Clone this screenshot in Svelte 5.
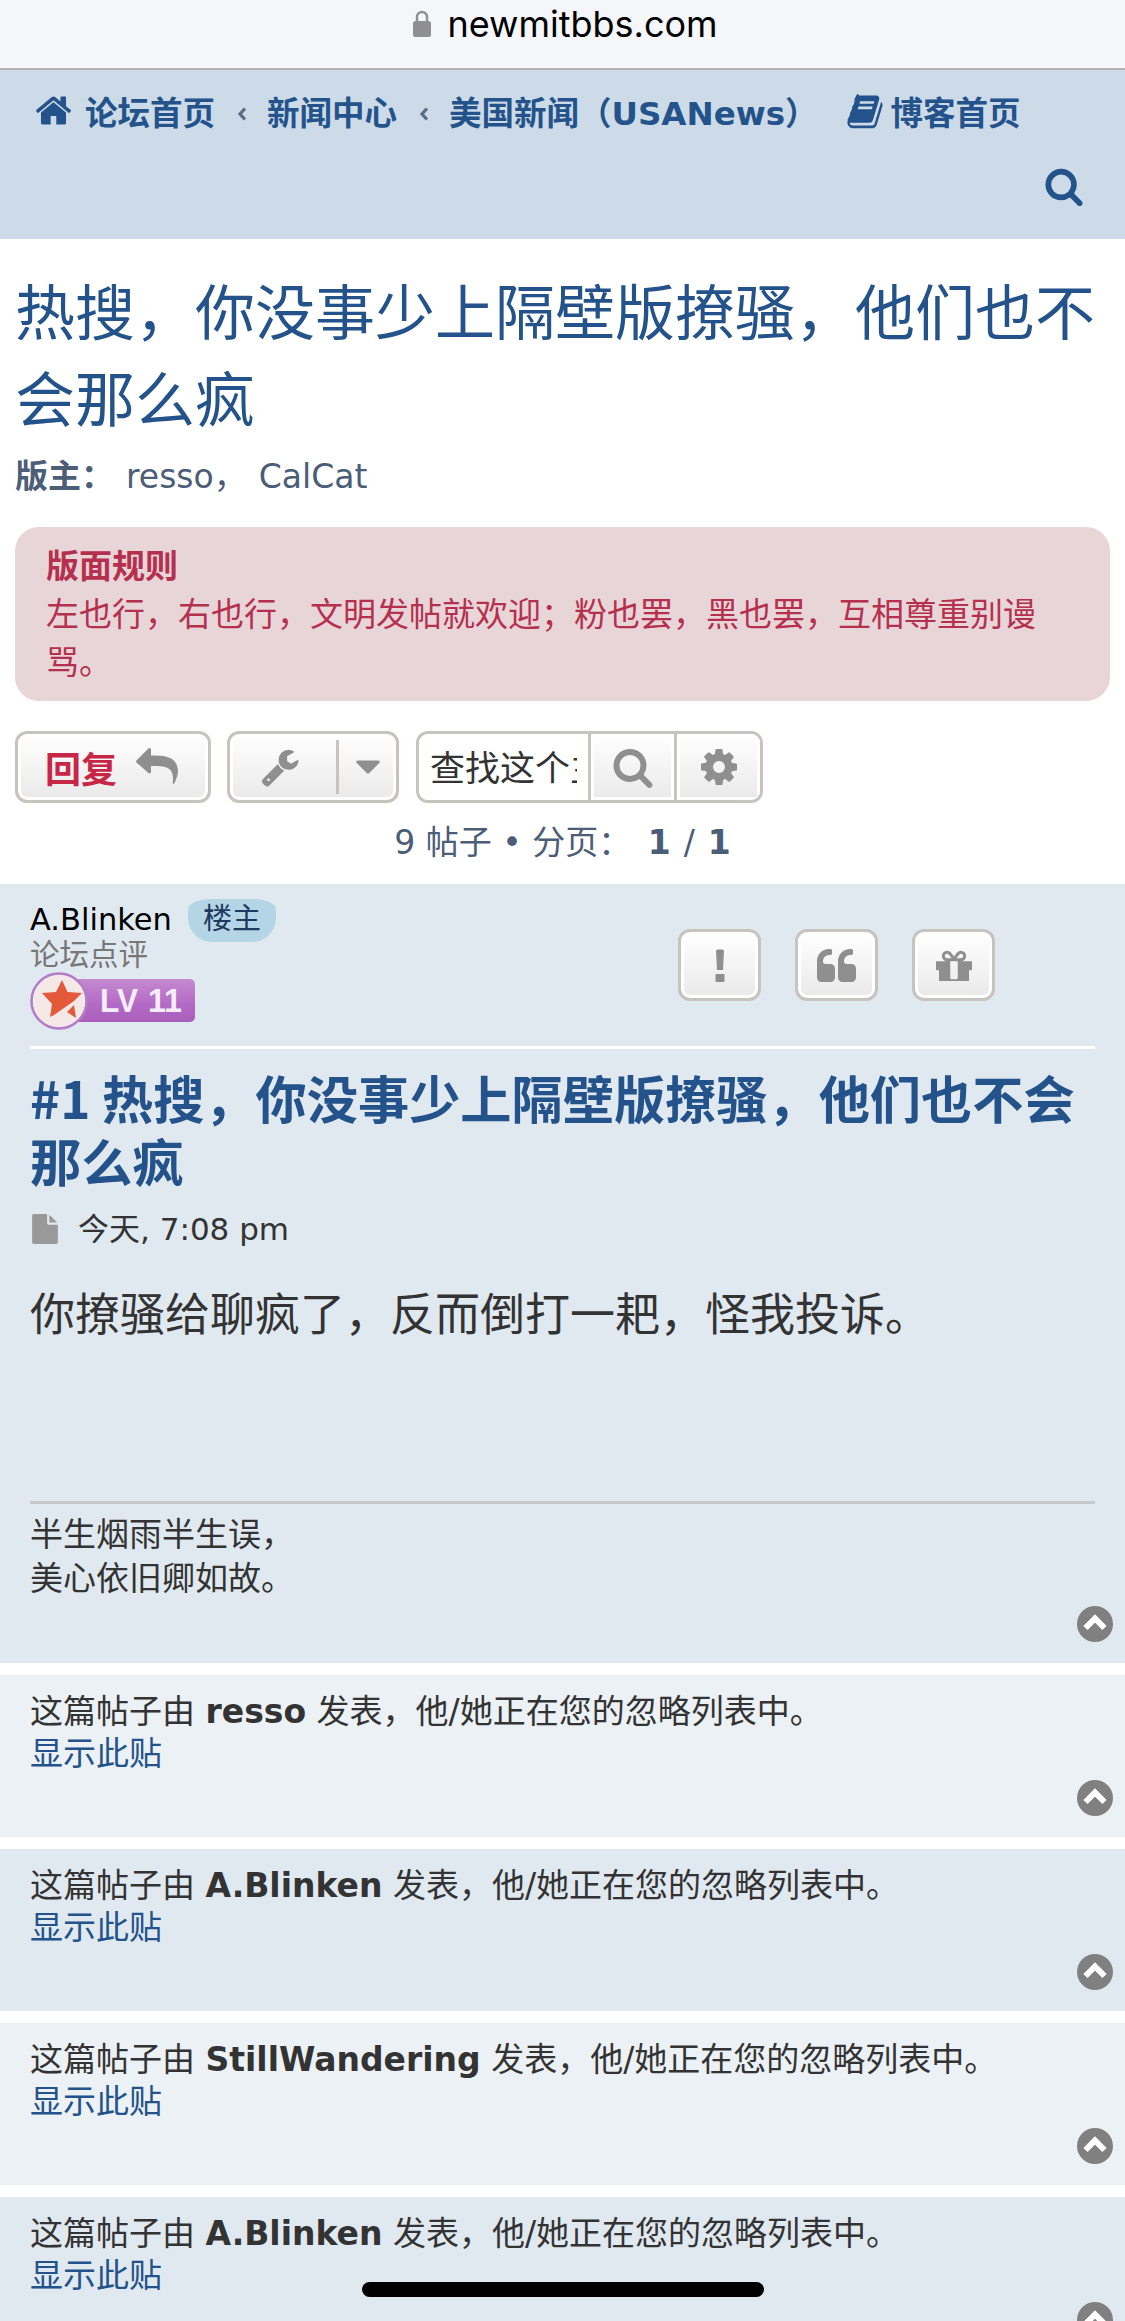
<script>
  const faBook = "M1703 478q40 57 18 129l-275 906q-19 64-76.5 107.5T1247 1664H324q-77 0-148.5-53.5T76 1479q-24-67-2-127 0-4 3-27t4-37q1-8-3-21.5t-3-19.5q2-11 8-21t16.5-23.5T116 1179q23-38 45-91.5t30-91.5q3-10 .5-30t-.5-28q3-11 17-28t17-23q21-36 42-92t25-90q1-9-2.5-32t.5-28q4-13 22-30.5t22-22.5q19-26 42.5-84.5T404 326q1-8-3-25.5t-2-26.5q2-8 9-18t18-23 17-21q8-12 16.5-30.5t15-35 16-36 19.5-32 26.5-23.5 36-11.5T620 128l-1 3q38-9 51-9h761q74 0 114 56t18 130l-274 906q-36 119-71.5 153.5T1089 1402H220q-27 0-38 15-11 16-1 43 24 70 144 70h923q29 0 56-15.5t35-41.5l300-987q7-22 5-57 38 15 59 43zm-1064 2q-4 13 2 22.5t20 9.5h608q13 0 25.5-9.5T1311 480l21-64q4-13-2-22.5t-20-9.5H702q-13 0-25.5 9.5T660 416zm-83 256q-4 13 2 22.5t20 9.5h608q13 0 25.5-9.5T1228 736l21-64q4-13-2-22.5t-20-9.5H619q-13 0-25.5 9.5T577 672z";
  const faHome = "M1472 992v480q0 26-19 45t-45 19h-384v-384H768v384H384q-26 0-45-19t-19-45V992q0-1 .5-3t.5-3l575-474 575 474q1 2 1 6zm223-69l-62 74q-8 9-21 11h-3q-13 0-21-7L896 424l-692 577q-12 8-24 7-13-2-21-11l-62-74q-8-10-7-23.5t11-21.5l719-599q32-26 76-26t76 26l244 204V288q0-14 9-23t23-9h192q14 0 23 9t9 23v408l219 182q10 8 11 21.5t-7 23.5z";
  const faSearch = "M1216 832q0-185-131.5-316.5T768 384 451.5 515.5 320 832t131.5 316.5T768 1280t316.5-131.5T1216 832zm512 832q0 52-38 90t-90 38q-54 0-90-38l-343-342q-179 124-399 124-143 0-273.5-55.5t-225-150-150-225T64 832t55.5-273.5 150-225 225-150T768 128t273.5 55.5 225 150 150 225T1472 832q0 220-124 399l343 343q37 37 37 90z";
  const faReply = "M1792 1120q0 166-127 451-3 7-10.5 24t-13.5 30-13 22q-12 17-28 17-15 0-23.5-10t-8.5-25q0-9 2.5-26.5t2.5-23.5q5-68 5-123 0-101-17.5-181t-48.5-138.5-80-101-105.5-69.5-133-42.5-154-21.5-175.5-6H640v256q0 26-19 45t-45 19-45-19L19 749Q0 730 0 704t19-45l512-512q19-19 45-19t45 19 19 45v256h224q713 0 875 403 53 134 53 333z";
  const faWrench = "M448 1472q0-26-19-45t-45-19-45 19-19 45 19 45 45 19 45-19 19-45zm644-420l-682 682q-37 37-90 37-52 0-91-37l-106-108q-38-36-38-90 0-53 38-91l681-681q39 98 114.5 173.5T1092 1052zm634-435q0 39-23 106-47 134-164.5 217.5T1280 1024q-185 0-316.5-131.5T832 576t131.5-316.5T1280 128q58 0 121.5 16.5T1509 191q16 11 16 28t-16 28l-293 169v224l193 107q5-3 79-48.5t135.5-81 70.5-35.5q15 0 23.5 10t8.5 25z";
  const faCaret = "M1408 704q0 26-19 45l-448 448q-19 19-45 19t-45-19L403 749q-19-19-19-45t19-45 45-19h896q26 0 45 19t19 45z";
  const faCog = "M1152 896q0-106-75-181t-181-75-181 75-75 181 75 181 181 75 181-75 75-181zm512-109v222q0 12-8 23t-20 13l-185 28q-19 54-39 91 35 50 107 138 10 12 10 25t-9 23q-27 37-99 108t-94 71q-12 0-26-9l-138-108q-44 23-91 38-16 136-29 186-7 28-36 28H785q-14 0-24.5-8.5T749 1634l-28-184q-49-16-90-37l-141 107q-10 9-25 9-14 0-25-11-126-114-165-168-7-10-7-23 0-12 8-23 15-21 51-66.5t54-70.5q-27-50-41-99l-183-27q-13-2-21-12.5t-8-23.5V783q0-12 8-23t19-13l186-28q14-46 39-92-40-57-107-138-10-12-10-24 0-10 9-23 26-36 98.5-107.5T465 263q13 0 26 10l138 107q44-23 91-38 16-136 29-186 7-28 36-28h222q14 0 24.5 8.5T1043 158l28 184q49 16 90 37l142-107q9-9 24-9 13 0 25 10 129 119 165 170 7 8 7 22 0 12-8 23-15 21-51 66.5t-54 70.5q26 50 41 98l183 28q13 2 21 12.5t8 23.5z";
  const faQuote = "M768 960v384q0 80-56 136t-136 56H192q-80 0-136-56T0 1344V640q0-104 40.5-198.5T150 278t163.5-109.5T512 128h64q26 0 45 19t19 45v128q0 26-19 45t-45 19h-64q-106 0-181 75t-75 181v32q0 40 28 68t68 28h224q80 0 136 56t56 136zm896 0v384q0 80-56 136t-136 56h-384q-80 0-136-56t-56-136V640q0-104 40.5-198.5T1046 278t163.5-109.5T1408 128h64q26 0 45 19t19 45v128q0 26-19 45t-45 19h-64q-106 0-181 75t-75 181v32q0 40 28 68t68 28h224q80 0 136 56t56 136z";
  const faGift = "M1056 1356v-716H736v716q0 25 18 38.5t46 13.5h192q28 0 46-13.5t18-38.5zM600 512h195L669 351q-26-31-69-31-40 0-68 28t-28 68 28 68 68 28zm688-96q0-40-28-68t-68-28q-43 0-69 31l-125 161h194q40 0 68-28t28-68zm376 256v320q0 14-9 23t-23 9h-96v416q0 40-28 68t-68 28H352q-40 0-68-28t-28-68v-416h-96q-14 0-23-9t-9-23V672q0-14 9-23t23-9h440q-93 0-158.5-65.5T376 416t65.5-158.5T600 192q107 0 168 77l128 165 128-165q61-77 168-77 93 0 158.5 65.5T1416 416t-65.5 158.5T1192 640h440q14 0 23 9t9 23z";
  const faFile = "M1024 512V40q22 14 36 28l408 408q14 14 28 36h-472zm-128 32q0 40 28 68t68 28h544v1056q0 40-28 68t-68 28H96q-40 0-68-28t-28-68V96q0-40 28-68t68-28h800v544z";

  const ignored = [
    { name: "resso", alt: true },
    { name: "A.Blinken", alt: false },
    { name: "StillWandering", alt: true },
    { name: "A.Blinken", alt: false }
  ];
</script>

{#snippet fa(d, cls, box = "0 0 1792 1792")}
  <svg class={cls} viewBox={box} xmlns="http://www.w3.org/2000/svg"><path fill="currentColor" d={d} /></svg>
{/snippet}

{#snippet chevronLeft()}
  <svg class="crumb-sep" viewBox="0 0 10 14"><path d="M8 1.500 3 7l5 5.500" fill="none" stroke="#5b6b84" stroke-width="3.200" /></svg>
{/snippet}

{#snippet backTop()}
  <div class="back-top">
    <svg viewBox="0 0 36 36" class="back-icon">
      <circle cx="18" cy="18" r="18" fill="#808080" />
      <path d="M8.500 22 18 12.500 27.500 22" fill="none" stroke="#fff" stroke-width="6" />
    </svg>
  </div>
{/snippet}

<div class="page">
  <div class="addr">
    <svg class="lock" viewBox="0 0 18 27">
      <path d="M4 12V7a5 5 0 0 1 10 0v5" fill="none" stroke="#8e8e93" stroke-width="2.400" />
      <rect x="0" y="11" width="18" height="16" rx="2.500" fill="#8e8e93" />
    </svg>
    <span>newmitbbs.com</span>
  </div>

  <nav class="nav">
    <div class="crumbs">
      {@render fa(faHome, "i-home")}
      <a class="crumb first">论坛首页</a>
      {@render chevronLeft()}
      <a class="crumb">新闻中心</a>
      {@render chevronLeft()}
      <a class="crumb">美国新闻（USANews）</a>
      {@render fa(faBook, "i-book")}
      <a class="crumb blog">博客首页</a>
    </div>
    <div class="nav-search">
      {@render fa(faSearch, "i-nav-search")}
    </div>
  </nav>

  <h2 class="forum-title">热搜，你没事少上隔壁版撩骚，他们也不会那么疯</h2>
  <p class="mods"><strong>版主：</strong><span class="m1">resso，</span><span class="m2">CalCat</span></p>

  <div class="rules">
    <strong>版面规则</strong>
    <div>左也行，右也行，文明发帖就欢迎；粉也罢，黑也罢，互相尊重别谩骂。</div>
  </div>

  <div class="actions">
    <button class="btn reply">回复 {@render fa(faReply, "i-reply")}</button>
    <button class="btn tools">
      <span class="tool-cell">{@render fa(faWrench, "i-wrench")}</span>
      <span class="tool-div"></span>
      <span class="caret-cell">{@render fa(faCaret, "i-caret", "370 630 1050 640")}</span>
    </button>
    <div class="search">
      <input type="text" value="查找这个主题" />
      <span class="s-btn s-first">{@render fa(faSearch, "i-s")}</span>
      <span class="s-btn">{@render fa(faCog, "i-s")}</span>
    </div>
  </div>

  <div class="pagination">9 帖子 • 分页： <strong class="pg">1</strong><span class="slash">/</span><strong>1</strong></div>

  <article class="post">
    <div class="profile">
      <div class="who">
        <div class="name-row">
          <span class="name">A.Blinken</span><span class="pill">楼主</span>
        </div>
        <div class="rank">论坛点评</div>
        <svg class="badge" viewBox="0 0 165 58">
          <defs>
            <linearGradient id="bar" x1="0" y1="0" x2="0" y2="1">
              <stop offset="0" stop-color="#c48ad0" />
              <stop offset="0.550" stop-color="#b56cc6" />
              <stop offset="1" stop-color="#a85fbb" />
            </linearGradient>
          </defs>
          <rect x="40" y="7" width="125" height="43" rx="5" fill="url(#bar)" />
          <circle cx="29" cy="29" r="27.500" fill="#f4e9e6" stroke="#b27cc8" stroke-width="2.500" />
          <path d="M32 8l5.500 12L52 21l-8 8-20 14-4 2 2-13-10-11 14-1z" fill="#e4593a" />
          <path d="M44 33l2 13-9-6z" fill="#e4593a" />
          <text x="70" y="40" class="lv" textLength="38" lengthAdjust="spacingAndGlyphs">LV</text>
          <text x="118" y="40" class="lv" textLength="34" lengthAdjust="spacingAndGlyphs">11</text>
        </svg>
      </div>
      <div class="post-btns">
        <button class="btn sq">
          <svg class="i-bang" viewBox="0 0 10 33"><path fill="currentColor" d="M1 2a1.500 1.500 0 0 1 1.500-1.500h5A1.500 1.500 0 0 1 9 2L8 21H2zM1.500 25h7a1 1 0 0 1 1 1v6a1 1 0 0 1-1 1h-7a1 1 0 0 1-1-1v-6a1 1 0 0 1 1-1z" /></svg>
        </button>
        <button class="btn sq">{@render fa(faQuote, "i-quote", "0 128 1664 1408")}</button>
        <button class="btn sq">{@render fa(faGift, "i-gift", "128 192 1536 1216")}</button>
      </div>
    </div>

    <h3 class="post-title">#1 热搜，你没事少上隔壁版撩骚，他们也不会那么疯</h3>
    <div class="date">{@render fa(faFile, "i-file", "0 0 1536 1792")}<span>今天, 7:08 pm</span></div>
    <div class="content">你撩骚给聊疯了，反而倒打一耙，怪我投诉。</div>
    <div class="sig">半生烟雨半生误，<br />美心依旧卿如故。</div>
    {@render backTop()}
  </article>

  {#each ignored as p}
    <article class="post small" class:alt={p.alt}>
      <div class="ign">这篇帖子由 <strong>{p.name}</strong> 发表，他/她正在您的忽略列表中。</div>
      <a class="show">显示此贴</a>
      {@render backTop()}
    </article>
  {/each}

  <div class="home-bar"></div>
</div>

<style>
  :global(body) {
    margin: 0;
    background: #fff;
  }

  .page {
    position: relative;
    width: 1125px;
    height: 2321px;
    overflow: hidden;
    font-family: "DejaVu Sans", "Noto Sans CJK SC", sans-serif;
    font-size: 33px;
    color: #333;
  }

  .addr {
    height: 68px;
    border-bottom: 2px solid #b4b4b6;
    background: #f4f6fa;
    display: flex;
    justify-content: center;
    gap: 16px;
    padding-left: 6px;
    color: #000;
    font-family: "Inter", "Liberation Sans", sans-serif;
    font-size: 36px;
    line-height: 48px;
  }
  .lock {
    width: 18px;
    height: 27px;
    margin-top: 10px;
  }

  .nav {
    height: 169px;
    background: #cddbe8;
    color: #23538a;
    font-weight: 700;
    box-sizing: border-box;
    padding: 22px 41px 0 34px;
  }
  .crumbs {
    display: flex;
    align-items: center;
    height: 44px;
    font-size: 32.500px;
    line-height: 44px;
    white-space: nowrap;
  }
  .crumb-sep {
    width: 10px;
    height: 14px;
    margin: 0 20px 0 22px;
  }
  .i-home {
    width: 39px;
    height: 39px;
    margin: -8px 12px 0 0;
  }
  .i-book {
    width: 38px;
    height: 38px;
    margin: -4px 7px 0 28px;
  }
  .nav-search {
    display: flex;
    justify-content: flex-end;
    margin-top: 30px;
  }
  .i-nav-search {
    width: 40px;
    height: 40px;
  }

  .forum-title {
    margin: 32px 0 0;
    padding: 0 15px;
    font-size: 60px;
    line-height: 87px;
    font-weight: 400;
    color: #23538a;
  }
  .mods {
    margin: 10px 0 0;
    padding: 0 15px;
    line-height: 44px;
    color: #4c5d77;
  }
  .m1 {
    margin-left: 12px;
  }
  .m2 {
    margin-left: 12px;
  }

  .rules {
    margin: 28px 15px 0;
    padding: 16px 31px 14px;
    border-radius: 24px;
    background: #e8d5d8;
    color: #b5304f;
    font-size: 33px;
    line-height: 48px;
  }

  .actions {
    display: flex;
    gap: 16px;
    margin: 30px 0 0 15px;
    height: 72px;
  }
  .btn {
    box-sizing: border-box;
    height: 72px;
    padding: 0;
    border: 3px solid #c7c3bf;
    border-radius: 12px;
    background: linear-gradient(#fff, #e9e9e9);
    box-shadow: inset 0 0 0 3px #fff;
    color: #8f8f8f;
    font-family: inherit;
    display: flex;
    align-items: center;
    justify-content: center;
  }
  .reply {
    width: 196px;
    justify-content: flex-start;
    padding-left: 27px;
    gap: 19px;
    color: #c72647;
    font-size: 36px;
    font-weight: 700;
  }
  .i-reply {
    width: 42px;
    height: 42px;
    color: #8f8f8f;
    margin-top: -2px;
  }
  .tools {
    width: 172px;
    justify-content: flex-start;
  }
  .tool-cell {
    display: flex;
    width: 106px;
    justify-content: center;
  }
  .i-wrench {
    width: 40px;
    height: 40px;
    margin-right: 6px;
  }
  .tool-div {
    width: 3px;
    height: 54px;
    background: #c7c3bf;
  }
  .caret-cell {
    display: flex;
    flex: 1;
    justify-content: center;
  }
  .i-caret {
    width: 24px;
    height: 15px;
  }

  .search {
    box-sizing: border-box;
    display: flex;
    width: 347px;
    height: 72px;
    margin-left: 1px;
    border: 3px solid #c7c3bf;
    border-radius: 12px;
    overflow: hidden;
  }
  .search input {
    box-sizing: border-box;
    width: 169px;
    flex: none;
    height: 100%;
    border: 0;
    outline: 0;
    padding: 0 11px 3px;
    background: #fff;
    color: #333;
    font-family: inherit;
    font-size: 35px;
  }
  .s-btn {
    flex: 1;
    box-sizing: border-box;
    display: flex;
    align-items: center;
    justify-content: center;
    border-left: 3px solid #c7c3bf;
    background: linear-gradient(#fff, #e9e9e9);
    box-shadow: inset 0 0 0 3px #fff;
    color: #8f8f8f;
  }
  .i-s {
    width: 42px;
    height: 42px;
  }

  .pagination {
    margin-top: 18px;
    text-align: center;
    line-height: 44px;
    color: #4c5d77;
  }
  .pg {
    margin-left: 6px;
  }
  .slash {
    margin: 0 13px;
  }

  .post {
    margin-top: 19px;
    background: #e1e9f0;
    padding: 15px 30px 21px;
    color: #333;
  }
  .post.small {
    margin-top: 12px;
    padding-top: 16px;
  }
  .post.alt {
    background: #ecf1f5;
  }

  .profile {
    display: flex;
    justify-content: space-between;
    padding-bottom: 16px;
    border-bottom: 3px solid #fff;
  }
  .name-row {
    display: flex;
    align-items: center;
    height: 43px;
    gap: 16px;
  }
  .name {
    color: #000;
    font-size: 30.500px;
    margin-top: -3px;
  }
  .pill {
    box-sizing: border-box;
    height: 43px;
    width: 88px;
    text-align: center;
    background: #b4d5e6;
    color: #1f3a5f;
    font-size: 29px;
    line-height: 40px;
    border-radius: 24px 24px 24px 24px / 10px 10px 24px 24px;
  }
  .rank {
    font-size: 29.500px;
    line-height: 26px;
    color: #777;
  }
  .badge {
    display: block;
    width: 165px;
    height: 58px;
    margin-top: 4px;
  }
  .lv {
    font-family: "Liberation Sans", sans-serif;
    font-size: 33px;
    font-weight: 700;
    fill: #f5eefa;
  }
  .post-btns {
    display: flex;
    gap: 34px;
    margin: 30px 100px 0 0;
  }
  .sq {
    width: 83px;
  }
  .i-bang {
    width: 10px;
    height: 33px;
  }
  .i-quote {
    width: 39px;
    height: 33px;
  }
  .i-gift {
    width: 36px;
    height: 32px;
  }

  .post-title {
    margin: 17px 0 0;
    font-family: "Noto Sans CJK SC", sans-serif;
    font-size: 51.200px;
    line-height: 63px;
    font-weight: 700;
    color: #23538a;
  }
  .date {
    margin-top: 15px;
    display: flex;
    align-items: center;
    gap: 20px;
    font-size: 31px;
    line-height: 44px;
  }
  .i-file {
    width: 26px;
    height: 30px;
    color: #999;
    margin-left: 2px;
  }
  .content {
    margin-top: 33px;
    height: 217px;
    font-size: 45px;
    line-height: 64px;
  }
  .sig {
    border-top: 3px solid #c8c8c8;
    padding-top: 9px;
    line-height: 44px;
  }

  .ign {
    line-height: 42px;
  }
  .show {
    display: block;
    color: #23538a;
    line-height: 42px;
  }

  .back-top {
    display: flex;
    justify-content: flex-end;
    margin: 5px -18px 0 0;
  }
  .back-icon {
    display: block;
    width: 36px;
    height: 36px;
  }

  .home-bar {
    position: absolute;
    left: 362px;
    top: 2282px;
    width: 402px;
    height: 15px;
    border-radius: 8px;
    background: #000;
  }
</style>
